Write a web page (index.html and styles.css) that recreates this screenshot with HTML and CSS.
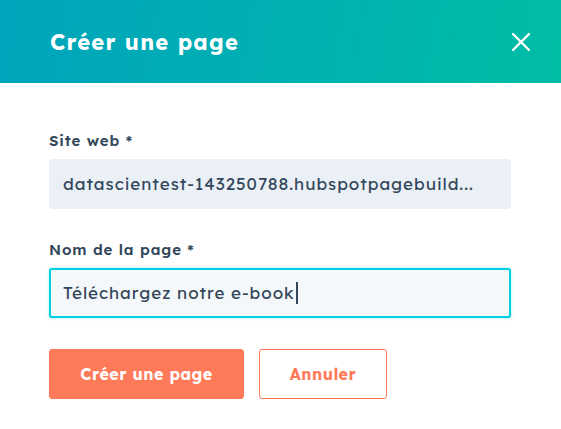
FILE: index.html
```html
<!DOCTYPE html>
<html lang="fr">
<head>
<meta charset="utf-8">
<link rel="stylesheet" href="styles.css">
</head>
<body>
<div class="modal">
  <header class="modal-header">
    <h1 class="modal-title">Créer une page</h1>
    <button class="close" aria-label="Fermer">
      <svg width="20" height="20" viewBox="0 0 20 20"><path d="M2 2 L18 18 M18 2 L2 18" stroke="#fff" stroke-width="2.4" stroke-linecap="round"/></svg>
    </button>
  </header>
  <div class="modal-body">
    <div class="field">
      <label class="label">Site web *</label>
      <div class="input readonly">datascientest-143250788.hubspotpagebuild...</div>
    </div>
    <div class="field">
      <label class="label">Nom de la page *</label>
      <div class="input focused">Téléchargez notre e-book<span class="caret"></span></div>
    </div>
    <div class="actions">
      <button class="btn primary">Créer une page</button>
      <button class="btn secondary">Annuler</button>
    </div>
  </div>
</div>
</body>
</html>
```
FILE: styles.css
```css
* { box-sizing: border-box; }
html, body { margin: 0; padding: 0; background: #fff; }
body { font-family: "Lexend Deca", "Open Sans", "Noto Sans", sans-serif; color: #33475b; }
.modal { width: 561px; height: 429px; background: #fff; }
.modal-header {
  height: 83px;
  background: linear-gradient(100deg, #00a4bd 0%, #00bda5 100%);
  display: flex; align-items: center; justify-content: space-between;
  padding: 0 30px 0 50px;
}
.modal-title { margin: 0; font-size: 22px; font-weight: 700; color: #fff; letter-spacing: 1.2px; }
.close { background: none; border: 0; padding: 0; width: 20px; height: 20px; display: flex; cursor: pointer; }
.modal-body { padding: 48px 50px 0 49px; }
.field { display: flex; flex-direction: column; margin-bottom: 31px; }
.label { font-size: 15px; font-weight: 600; line-height: 20px; margin-bottom: 8px; color: #33475b; letter-spacing: 0.9px; }
.input {
  height: 50px; border-radius: 3px; font-size: 17px; line-height: 20px; letter-spacing: 0.95px;
  padding: 0 13px; display: flex; align-items: center; color: #33475b; white-space: nowrap;
}
.readonly { background: #eaf0f6; border: 1px solid #eaf0f6; }
.focused { background: #f5f8fa; border: 2px solid #00d0e4; padding: 0 12px; box-shadow: 0 0 3px rgba(0,208,228,0.4); }
.caret { display: inline-block; width: 2px; height: 22px; background: #33475b; margin-left: 1px; }
.actions { display: flex; gap: 15px; margin-top: 1px; }
.btn { height: 50px; border-radius: 3px; font-family: inherit; font-size: 16px; font-weight: 700; cursor: pointer; letter-spacing: 0.5px; }
.primary { width: 195px; background: #ff7a59; color: #fff; border: 1px solid #ff7a59; }
.secondary { width: 128px; background: #fff; color: #ff7a59; border: 1px solid #ff7a59; }
```
